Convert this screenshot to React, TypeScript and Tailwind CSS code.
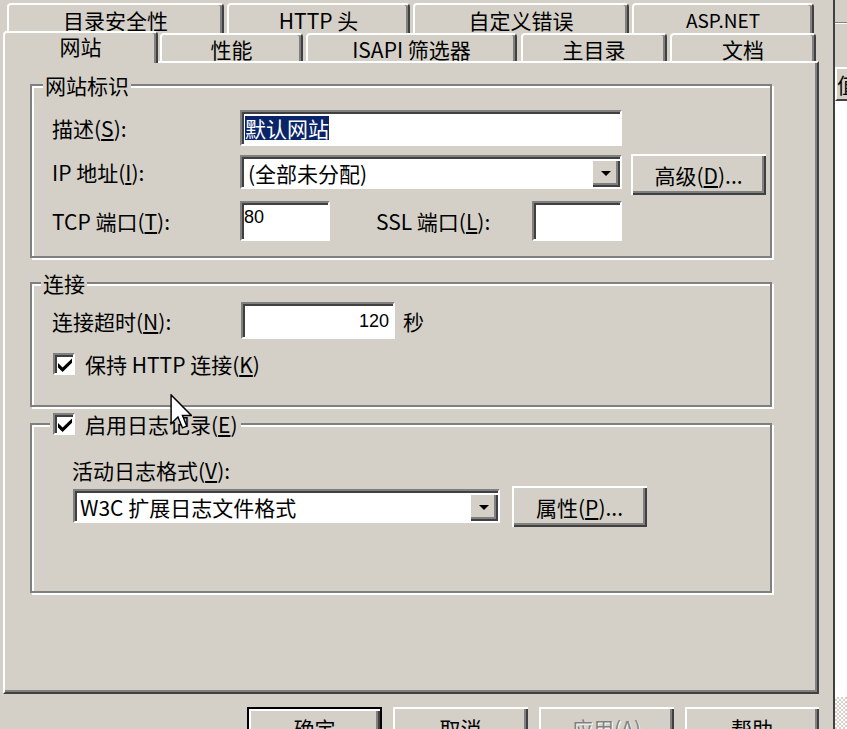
import React from "react";

const raised =
  "bg-[#d4d0c8] shadow-[inset_2px_2px_0_#ffffff,inset_-2px_-2px_0_#404040,inset_-4px_-4px_0_#808080]";
const sunken =
  "bg-white border-2 border-t-[#808080] border-l-[#808080] border-r-white border-b-white shadow-[inset_2px_2px_0_#404040]";
const group =
  "w-[742px] border-2 border-[#808080] shadow-[inset_2px_2px_0_#ffffff,2px_2px_0_#ffffff]";
const backTab =
  "h-[30px] pt-[3px] border-t-2 border-x-2 border-t-white border-l-white border-r-[#404040] rounded-t-[4px] shadow-[inset_-2px_0_0_#808080] text-center leading-[24px] whitespace-nowrap";
const frontTab =
  "pt-[2px] border-t-2 border-x-2 border-t-white border-l-white border-r-[#404040] rounded-t-[4px] shadow-[inset_-2px_0_0_#808080] text-center leading-[24px] whitespace-nowrap";

function CheckBox() {
  return (
    <span className={sunken + " w-[22px] h-[22px] shrink-0 flex items-center justify-center"}>
      <svg width="14" height="14" viewBox="0 0 7 7" className="ml-[1px] mt-[1px]">
        <polygon points="0,2.5 2.3,4.8 7,0.2 7,2.4 2.3,7 0,4.7" fill="black" />
      </svg>
    </span>
  );
}

function DropButton() {
  return (
    <span className={raised + " w-[29px] self-stretch shrink-0 flex items-center justify-center"}>
      <svg width="10" height="5" viewBox="0 0 10 5">
        <polygon points="0,0 10,0 5,5" fill="black" />
      </svg>
    </span>
  );
}

export default function App() {
  return (
    <div className="relative w-[847px] h-[729px] overflow-hidden bg-[#d4d0c8] flex text-black text-[21px] leading-[24px] font-['Noto_Sans_CJK_SC','Noto_Sans',sans-serif]">
      {/* dialog */}
      <div className="w-[833px] shrink-0 flex flex-col pl-[3px] pt-[3px]">
        {/* back row of tabs */}
        <div className="flex pl-[4px]">
          <div className={backTab + " w-[217px]"}>目录安全性</div>
          <div className={backTab + " w-[183px] ml-[3px]"}>HTTP 头</div>
          <div className={backTab + " w-[216px] ml-[3px]"}>自定义错误</div>
          <div className={backTab + " w-[182px] ml-[3px] text-[19px]"}>ASP.NET</div>
        </div>

        {/* front row of tabs */}
        <div className="flex h-[32px]">
          <div className="w-[155px] -mt-[2px] -mb-[2px] relative z-10 bg-[#d4d0c8] pt-[1px] border-t-2 border-x-2 border-t-white border-l-white border-r-[#404040] rounded-t-[4px] shadow-[inset_-2px_0_0_#808080] text-center leading-[24px]">
            网站
          </div>
          <div className={frontTab + " w-[143px] ml-[2px]"}>性能</div>
          <div className={frontTab + " w-[211px] ml-[3px]"}>ISAPI 筛选器</div>
          <div className={frontTab + " w-[146px] ml-[4px]"}>主目录</div>
          <div className={frontTab + " w-[146px] ml-[3px]"}>文档</div>
        </div>

        {/* tab page */}
        <div className="w-[816px] h-[633px] shrink-0 border-2 border-t-white border-l-white border-r-[#404040] border-b-[#404040] shadow-[inset_-2px_-2px_0_#808080] pl-[25px] pt-[21px]">
          {/* 网站标识 */}
          <div className={group + " pb-[15px]"}>
            <div className="-mt-[13px] ml-[11px] px-[2px] w-fit bg-[#d4d0c8]">网站标识</div>

            <div className="mt-[13px] flex items-center pl-[20px]">
              <span className="w-[188px]">
                描述(<u>S</u>):
              </span>
              <div className={sunken + " w-[382px] h-[36px] flex items-center pl-[3px]"}>
                <span className="bg-[#0a246a] text-white">默认网站</span>
              </div>
            </div>

            <div className="mt-[8px] flex items-start pl-[20px]">
              <span className="w-[188px] h-[35px] flex items-center">
                IP 地址(<u>I</u>):
              </span>
              <div className={sunken + " w-[382px] h-[34px] mt-[1px] flex pt-[2px] pl-[2px]"}>
                <span className="flex-1 pl-[4px] leading-[28px]">(全部未分配)</span>
                <DropButton />
              </div>
              <button className={raised + " ml-[9px] w-[135px] h-[41px] leading-[24px]"}>
                高级(<u>D</u>)...
              </button>
            </div>

            <div className="mt-[6px] flex items-center pl-[20px] h-[40px]">
              <span className="w-[188px]">
                TCP 端口(<u>T</u>):
              </span>
              <div className={sunken + " w-[90px] h-[40px] pl-[2px] text-[18px] leading-[28px] font-['Liberation_Sans',sans-serif]"}>
                80
              </div>
              <span className="ml-[46px] w-[156px]">
                SSL 端口(<u>L</u>):
              </span>
              <div className={sunken + " w-[90px] h-[40px]"} />
            </div>
          </div>

          {/* 连接 */}
          <div className={group + " mt-[24px] pb-[29px]"}>
            <div className="-mt-[13px] ml-[9px] px-[2px] w-fit bg-[#d4d0c8]">连接</div>

            <div className="mt-[7px] flex items-center pl-[20px]">
              <span className="w-[189px]">
                连接超时(<u>N</u>):
              </span>
              <div className={sunken + " w-[154px] h-[37px] flex items-center justify-end pr-[4px] text-[18px] font-['Liberation_Sans',sans-serif]"}>
                120
              </div>
              <span className="ml-[8px]">秒</span>
            </div>

            <div className="mt-[13px] flex items-center gap-[10px] pl-[21px]">
              <CheckBox />
              <span>
                保持 HTTP 连接(<u>K</u>)
              </span>
            </div>
          </div>

          {/* 启用日志记录 */}
          <div className={group + " mt-[16px] pb-[64px]"}>
            <div className="-mt-[13px] ml-[18px] px-[3px] w-fit bg-[#d4d0c8] flex items-center gap-[10px]">
              <CheckBox />
              <span>
                启用日志记录(<u>E</u>)
              </span>
            </div>

            <div className="mt-[22px] pl-[40px]">
              活动日志格式(<u>V</u>):
            </div>

            <div className="mt-[4px] flex items-start pl-[41px]">
              <div className={sunken + " w-[427px] h-[34px] mt-[3px] flex pt-[2px] pl-[2px]"}>
                <span className="flex-1 pl-[3px] leading-[28px]">W3C 扩展日志文件格式</span>
                <DropButton />
              </div>
              <button className={raised + " ml-[12px] w-[135px] h-[41px] leading-[24px]"}>
                属性(<u>P</u>)...
              </button>
            </div>
          </div>
        </div>

        {/* dialog buttons */}
        <div className="mt-[13px] flex gap-[11px] pl-[244px] shrink-0">
          <button className="w-[135px] h-[41px] border-2 border-black bg-[#d4d0c8] shadow-[inset_2px_2px_0_#ffffff,inset_-2px_-2px_0_#404040,inset_-4px_-4px_0_#808080]">
            确定
          </button>
          <button className={raised + " w-[135px] h-[41px]"}>取消</button>
          <button className={raised + " w-[135px] h-[41px] text-[#808080] [text-shadow:1px_1px_0_#ffffff]"}>
            应用(<u>A</u>)
          </button>
          <button className={raised + " w-[134px] h-[41px]"}>帮助</button>
        </div>
      </div>

      {/* dialog frame edge */}
      <div className="w-[2px] shrink-0 bg-[#404040]" />

      {/* window behind */}
      <div className="flex-1 flex flex-col overflow-hidden">
        <div className="h-[22px] shrink-0" />
        <div className="h-px shrink-0 bg-[#808080]" />
        <div className="h-px shrink-0 bg-white" />
        <div className="h-[43px] shrink-0" />
        <div className="h-[2px] shrink-0 bg-white" />
        <div className="h-[32px] shrink-0 border-l-2 border-white border-b-2 border-b-[#404040] leading-[30px] whitespace-nowrap">
          值
        </div>
        <div className="flex-1 bg-white" />
        <div className="h-[32px] shrink-0 bg-[repeating-conic-gradient(#d4d0c8_0_25%,#ffffff_0_50%)] bg-[length:4px_4px]" />
      </div>

      {/* mouse pointer */}
      <svg
        className="absolute left-[170px] top-[394px] pointer-events-none"
        width="22"
        height="36"
        viewBox="0 0 12 20"
      >
        <path
          d="M0.5 0.5 L0.5 16.5 L4.3 12.8 L6.8 18.8 L9.2 17.8 L6.8 11.9 L11.8 11.9 Z"
          fill="white"
          stroke="black"
          strokeWidth="0.8"
        />
      </svg>
    </div>
  );
}
